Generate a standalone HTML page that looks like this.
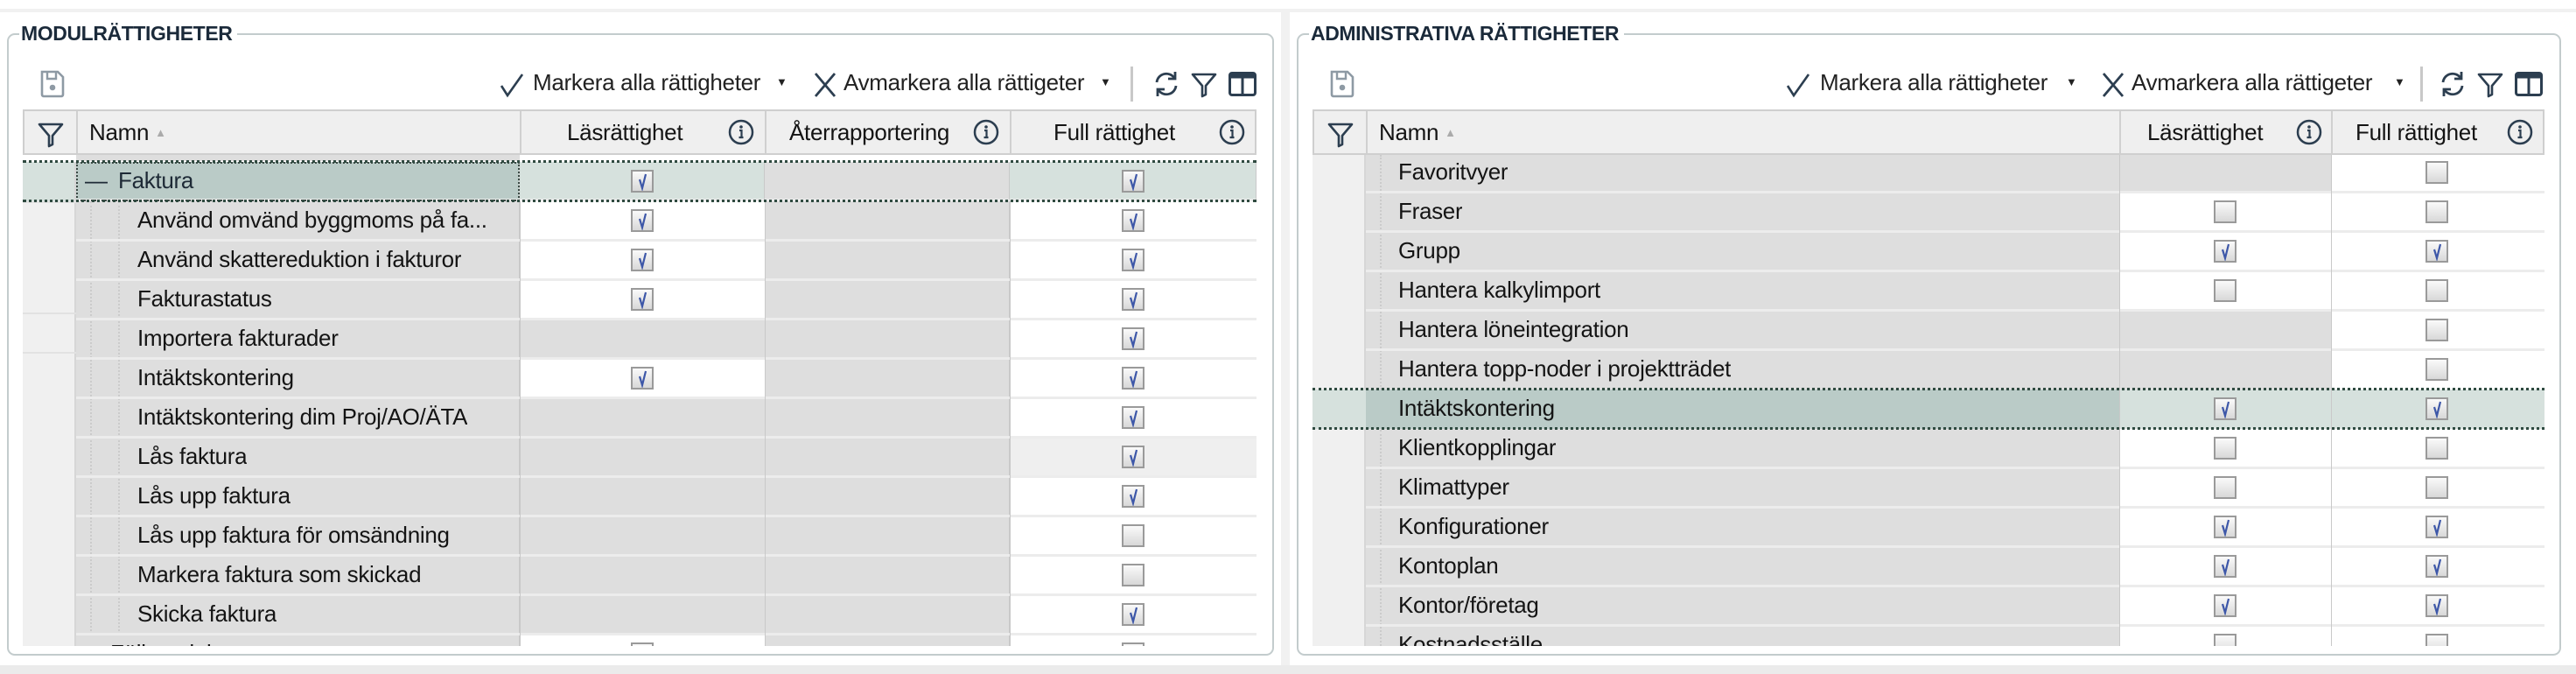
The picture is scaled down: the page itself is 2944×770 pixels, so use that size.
<!DOCTYPE html>
<html><head><meta charset="utf-8"><style>
*{box-sizing:border-box;margin:0;padding:0}
body{width:2944px;height:770px;background:#fff;position:relative;overflow:hidden;font-family:"Liberation Sans",sans-serif;color:#141414}
.abs{position:absolute}
.panel{position:absolute;top:38px;height:711px;border:2px solid #c3cccd;border-radius:9px}
.title{position:absolute;top:25px;font-size:23px;font-weight:bold;color:#1b2a3a;background:#fff;padding:0 6px 0 2px;letter-spacing:-0.4px;line-height:26px}
.tb{position:absolute;top:79px;font-size:26px;line-height:30px;color:#222;letter-spacing:-0.3px}
.grid{position:absolute;top:125px;height:613px;overflow:hidden;background:#fff}
.hdr{position:absolute;left:0;top:0;height:52px;background:#efefef;border:2px solid #cfcfcf;z-index:3}
.hc{position:absolute;top:0;height:48px;border-right:2px solid #d0d0d0;font-size:26px;line-height:48px;letter-spacing:-0.3px;white-space:nowrap}
.row{position:absolute;left:0;height:45px}
.cell{position:absolute;top:0;height:45px;border-bottom:3px solid #ececec;border-right:1px solid #c9c9c9}
.i0{background:#f0f0f0;border-right:2px solid #d6d6d6;border-bottom:none}
.nm{font-size:26px;line-height:43px;white-space:nowrap;overflow:hidden;letter-spacing:-0.3px}
.cb{position:absolute;top:9px;width:26px;height:26px;border:2px solid #9a9a9a;background:linear-gradient(#fafafa,#d8d8d8)}
.sel .cell{background:#d6e1dd}
.sel .nmc{background:#bacbc7;outline:2px dotted #3c4a45;outline-offset:-2px}
.dot{position:absolute;left:0;height:0;border-top:3px dotted #2f4a40;z-index:2}
.tl{position:absolute;top:0;bottom:0;border-left:2px dotted #cbcbcb}
</style></head><body>
<div class="abs" style="left:0;top:10px;width:2944px;height:4px;background:#f1f1f1"></div>
<div class="abs" style="left:1464px;top:14px;width:10px;height:746px;background:#f1f1f1"></div>
<div class="abs" style="left:0;top:760px;width:2944px;height:10px;background:#ebebeb"></div>

<svg width="0" height="0" style="position:absolute">
<defs>
<symbol id="ck" viewBox="0 0 22 22"><path d="M8 9 L11 19 L15 3" fill="none" stroke="#3d57a8" stroke-width="2.2"/></symbol>
<symbol id="info" viewBox="0 0 30 30"><circle cx="15" cy="15" r="13" fill="none" stroke="#2c3e50" stroke-width="2.5"/><circle cx="15" cy="9" r="1.8" fill="#2c3e50"/><path d="M13 13h2.5v8M12.5 21h5" fill="none" stroke="#2c3e50" stroke-width="2.2"/></symbol>
<symbol id="save" viewBox="0 0 32 32"><path d="M4 2h18l6 6v20a2 2 0 0 1-2 2H6a2 2 0 0 1-2-2z" fill="none" stroke="#8e9aa4" stroke-width="2.6"/><path d="M10 2v8h10V2" fill="none" stroke="#8e9aa4" stroke-width="2.4"/><circle cx="16" cy="20" r="3.3" fill="#8e9aa4"/></symbol>
<symbol id="filt" viewBox="0 0 32 32"><path d="M3 5h26L18 18v10l-4 2V18z" fill="none" stroke="#2c3e50" stroke-width="2.6" stroke-linejoin="round"/></symbol>
<symbol id="refr" viewBox="0 0 32 32"><path d="M5 14a11 11 0 0 1 20-5M27 18a11 11 0 0 1-20 5" fill="none" stroke="#2c3e50" stroke-width="2.8"/><path d="M26 2v8h-8M6 30v-8h8" fill="none" stroke="#2c3e50" stroke-width="2.8"/></symbol>
<symbol id="cols" viewBox="0 0 32 28"><rect x="1.5" y="1.5" width="29" height="25" rx="2.5" fill="none" stroke="#2c3e50" stroke-width="3"/><rect x="1.5" y="1.5" width="29" height="6" fill="#2c3e50"/><path d="M16 2v25" stroke="#2c3e50" stroke-width="3"/></symbol>
<symbol id="chk" viewBox="0 0 30 30"><path d="M3 16 L10 27 L27 3" fill="none" stroke="#2c3e50" stroke-width="2.6"/></symbol>
<symbol id="x" viewBox="0 0 30 30"><path d="M4 2 L26 28 M26 2 L4 28" fill="none" stroke="#2c3e50" stroke-width="2.8"/></symbol>
</defs></svg>

<!-- LEFT PANEL -->
<div class="panel" style="left:8px;width:1448px"></div>
<div class="title" style="left:22px">MODULRÄTTIGHETER</div>
<svg class="abs" style="left:44px;top:80px" width="32" height="32"><use href="#save"/></svg>
<svg class="abs" style="left:570px;top:82px" width="30" height="30"><use href="#chk"/></svg>
<div class="tb" style="left:609px">Markera alla rättigheter</div>
<div class="tb" style="left:887px;font-size:13px">▼</div>
<svg class="abs" style="left:928px;top:82px" width="30" height="30"><use href="#x"/></svg>
<div class="tb" style="left:964px">Avmarkera alla rättigeter</div>
<div class="tb" style="left:1257px;font-size:13px">▼</div>
<div class="abs" style="left:1292px;top:76px;width:3px;height:40px;background:#c8c8c8"></div>
<svg class="abs" style="left:1317px;top:80px" width="32" height="32"><use href="#refr"/></svg>
<svg class="abs" style="left:1360px;top:80px" width="32" height="32"><use href="#filt"/></svg>
<svg class="abs" style="left:1404px;top:82px" width="32" height="28"><use href="#cols"/></svg>

<div class="grid" style="left:26px;width:1410px">
 <div class="hdr" style="width:1410px">
  <div class="hc" style="left:0;width:61px"><svg class="abs" style="left:14px;top:10px" width="32" height="32"><use href="#filt"/></svg></div>
  <div class="hc" style="left:61px;width:507px;padding-left:13px">Namn <span style="color:#aaa;font-size:13px;vertical-align:4px">▲</span></div>
  <div class="hc" style="left:568px;width:280px"><span class="abs" style="left:52px">Läsrättighet</span><svg class="abs" style="left:236px;top:9px" width="30" height="30"><use href="#info"/></svg></div>
  <div class="hc" style="left:848px;width:280px"><span class="abs" style="left:26px">Återrapportering</span><svg class="abs" style="left:236px;top:9px" width="30" height="30"><use href="#info"/></svg></div>
  <div class="hc" style="left:1128px;width:278px;border-right:none"><span class="abs" style="left:48px">Full rättighet</span><svg class="abs" style="left:237px;top:9px" width="30" height="30"><use href="#info"/></svg></div>
 </div>
 <div class="dot" style="top:58px;width:1410px"></div>
 <div class="dot" style="top:103px;width:1410px"></div>
 <div class="row sel" style="top:60px;width:1410px">
  <div class="cell i0" style="left:0;width:61px;background:#d6e1dd"></div>
  <div class="cell nmc nm" style="left:61px;width:507px;padding-left:48px;color:#1e2a36"><span class="abs" style="left:10px;top:0">—</span>Faktura</div>
  <div class="cell" style="left:568px;width:280px"><div class="cb" style="left:127px"><svg width="22" height="22"><use href="#ck"/></svg></div></div>
  <div class="cell" style="left:848px;width:280px;background:#dedede"></div>
  <div class="cell" style="left:1128px;width:282px"><div class="cb" style="left:128px"><svg width="22" height="22"><use href="#ck"/></svg></div></div>
 </div>
</div>

<div class="abs" style="left:26px;top:230px;width:1410px;height:508px;overflow:hidden">
 <div class="abs" style="left:0;top:0;width:61px;height:508px;background:#f0f0f0;border-right:2px solid #d6d6d6"></div>
 <div class="abs" style="left:0;top:127px;width:61px;height:2px;background:#e2e2e2"></div>
 <div class="abs" style="left:0;top:172px;width:61px;height:2px;background:#e2e2e2"></div>
 <div class="abs" style="left:0;top:0;width:61px;height:2px;background:#e2e2e2"></div>
 <div class="abs" style="left:61px;top:0;width:507px;height:508px;background:#dedede;border-right:1px solid #c9c9c9"></div>
 <div class="abs" style="left:848px;top:0;width:280px;height:508px;background:#dedede;border-left:1px solid #c9c9c9;border-right:1px solid #c9c9c9"></div>
 <div class="abs" style="left:568px;top:0;width:280px;height:508px;background:#dedede"></div>
 <div class="abs" style="left:1128px;top:0;width:282px;height:508px;background:#fff"></div>
 <div class="tl" style="left:77px;height:495px"></div>
 <div class="tl" style="left:109px;height:495px"></div>
</div>
<div class="abs" style="left:26px;top:230px;width:1410px;height:508px;overflow:hidden">
 <div class="row" style="top:0;width:1410px"><div class="abs" style="left:568px;width:280px;height:45px;background:#fff"></div><div class="abs nm" style="left:131px;width:435px">Använd omvänd byggmoms på fa...</div><div class="cb" style="left:695px"><svg width="22" height="22"><use href="#ck"/></svg></div><div class="cb" style="left:1256px"><svg width="22" height="22"><use href="#ck"/></svg></div></div>
 <div class="row" style="top:45px;width:1410px"><div class="abs" style="left:568px;width:280px;height:45px;background:#fff"></div><div class="abs nm" style="left:131px">Använd skattereduktion i fakturor</div><div class="cb" style="left:695px"><svg width="22" height="22"><use href="#ck"/></svg></div><div class="cb" style="left:1256px"><svg width="22" height="22"><use href="#ck"/></svg></div></div>
 <div class="row" style="top:90px;width:1410px"><div class="abs" style="left:568px;width:280px;height:45px;background:#fff"></div><div class="abs nm" style="left:131px">Fakturastatus</div><div class="cb" style="left:695px"><svg width="22" height="22"><use href="#ck"/></svg></div><div class="cb" style="left:1256px"><svg width="22" height="22"><use href="#ck"/></svg></div></div>
 <div class="row" style="top:135px;width:1410px"><div class="abs nm" style="left:131px">Importera fakturader</div><div class="cb" style="left:1256px"><svg width="22" height="22"><use href="#ck"/></svg></div></div>
 <div class="row" style="top:180px;width:1410px"><div class="abs" style="left:568px;width:280px;height:45px;background:#fff"></div><div class="abs nm" style="left:131px">Intäktskontering</div><div class="cb" style="left:695px"><svg width="22" height="22"><use href="#ck"/></svg></div><div class="cb" style="left:1256px"><svg width="22" height="22"><use href="#ck"/></svg></div></div>
 <div class="row" style="top:225px;width:1410px"><div class="abs nm" style="left:131px">Intäktskontering dim Proj/AO/ÄTA</div><div class="cb" style="left:1256px"><svg width="22" height="22"><use href="#ck"/></svg></div></div>
 <div class="row" style="top:270px;width:1410px"><div class="abs" style="left:1128px;width:282px;height:45px;background:#efefef"></div><div class="abs nm" style="left:131px">Lås faktura</div><div class="cb" style="left:1256px"><svg width="22" height="22"><use href="#ck"/></svg></div></div>
 <div class="row" style="top:315px;width:1410px"><div class="abs nm" style="left:131px">Lås upp faktura</div><div class="cb" style="left:1256px"><svg width="22" height="22"><use href="#ck"/></svg></div></div>
 <div class="row" style="top:360px;width:1410px"><div class="abs nm" style="left:131px">Lås upp faktura för omsändning</div><div class="cb" style="left:1256px"></div></div>
 <div class="row" style="top:405px;width:1410px"><div class="abs nm" style="left:131px">Markera faktura som skickad</div><div class="cb" style="left:1256px"></div></div>
 <div class="row" style="top:450px;width:1410px"><div class="abs nm" style="left:131px">Skicka faktura</div><div class="cb" style="left:1256px"><svg width="22" height="22"><use href="#ck"/></svg></div></div>
 <div class="row" style="top:495px;width:1410px"><div class="abs" style="left:568px;width:280px;height:45px;background:#fff"></div><div class="abs nm" style="left:100px">Följesedel</div><div class="cb" style="left:695px"></div><div class="cb" style="left:1256px"></div></div>
 <div class="abs" style="left:61px;top:43px;width:1349px;height:3px;background:#ececec"></div>
 <div class="abs" style="left:61px;top:88px;width:1349px;height:3px;background:#ececec"></div>
 <div class="abs" style="left:61px;top:133px;width:1349px;height:3px;background:#ececec"></div>
 <div class="abs" style="left:61px;top:178px;width:1349px;height:3px;background:#ececec"></div>
 <div class="abs" style="left:61px;top:223px;width:1349px;height:3px;background:#ececec"></div>
 <div class="abs" style="left:61px;top:268px;width:1349px;height:3px;background:#ececec"></div>
 <div class="abs" style="left:61px;top:313px;width:1349px;height:3px;background:#ececec"></div>
 <div class="abs" style="left:61px;top:358px;width:1349px;height:3px;background:#ececec"></div>
 <div class="abs" style="left:61px;top:403px;width:1349px;height:3px;background:#ececec"></div>
 <div class="abs" style="left:61px;top:448px;width:1349px;height:3px;background:#ececec"></div>
 <div class="abs" style="left:61px;top:493px;width:1349px;height:3px;background:#ececec"></div>
 <div class="abs" style="left:1128px;top:0;width:1px;height:508px;background:#c9c9c9"></div>
 <div class="abs" style="left:848px;top:0;width:1px;height:508px;background:#c9c9c9"></div>
 <div class="abs" style="left:568px;top:0;width:1px;height:508px;background:#c9c9c9"></div>
</div>
<div class="abs" style="left:87px;top:177px;width:507px;height:7px;background:#dedede"></div>

<!-- RIGHT PANEL -->
<div class="panel" style="left:1482px;width:1445px"></div>
<div class="title" style="left:1496px">ADMINISTRATIVA RÄTTIGHETER</div>
<svg class="abs" style="left:1518px;top:80px" width="32" height="32"><use href="#save"/></svg>
<svg class="abs" style="left:2040px;top:82px" width="30" height="30"><use href="#chk"/></svg>
<div class="tb" style="left:2080px">Markera alla rättigheter</div>
<div class="tb" style="left:2361px;font-size:13px">▼</div>
<svg class="abs" style="left:2400px;top:82px" width="30" height="30"><use href="#x"/></svg>
<div class="tb" style="left:2436px">Avmarkera alla rättigeter</div>
<div class="tb" style="left:2736px;font-size:13px">▼</div>
<div class="abs" style="left:2766px;top:76px;width:3px;height:40px;background:#c8c8c8"></div>
<svg class="abs" style="left:2787px;top:80px" width="32" height="32"><use href="#refr"/></svg>
<svg class="abs" style="left:2830px;top:80px" width="32" height="32"><use href="#filt"/></svg>
<svg class="abs" style="left:2874px;top:82px" width="32" height="28"><use href="#cols"/></svg>

<div class="grid" style="left:1500px;width:1408px">
 <div class="hdr" style="width:1408px">
  <div class="hc" style="left:0;width:61px"><svg class="abs" style="left:14px;top:10px" width="32" height="32"><use href="#filt"/></svg></div>
  <div class="hc" style="left:61px;width:861px;padding-left:13px">Namn <span style="color:#aaa;font-size:13px;vertical-align:4px">▲</span></div>
  <div class="hc" style="left:922px;width:242px"><span class="abs" style="left:30px">Läsrättighet</span><svg class="abs" style="left:200px;top:9px" width="30" height="30"><use href="#info"/></svg></div>
  <div class="hc" style="left:1164px;width:240px;border-right:none"><span class="abs" style="left:26px">Full rättighet</span><svg class="abs" style="left:199px;top:9px" width="30" height="30"><use href="#info"/></svg></div>
 </div>
</div>
<div class="abs" style="left:1500px;top:177px;width:1408px;height:561px;overflow:hidden">
 <div class="abs" style="left:0;top:0;width:61px;height:561px;background:#f0f0f0;border-right:2px solid #d6d6d6"></div>
 <div class="abs" style="left:61px;top:0;width:861px;height:561px;background:#dedede"></div>
 <div class="abs" style="left:922px;top:0;width:242px;height:561px;background:#fff"></div>
 <div class="abs" style="left:922px;top:0;width:242px;height:43px;background:#dedede"></div>
 <div class="abs" style="left:922px;top:178px;width:242px;height:90px;background:#dedede"></div>
 <div class="abs" style="left:1164px;top:0;width:244px;height:561px;background:#fff"></div>
 <div class="abs" style="left:0;top:268px;width:1408px;height:45px;background:#d6e1dd"></div>
 <div class="abs" style="left:61px;top:268px;width:861px;height:45px;background:#bacbc7"></div>
 <div class="abs" style="left:0;top:266px;width:1408px;border-top:3px dotted #2f4a40"></div>
 <div class="abs" style="left:0;top:311px;width:1408px;border-top:3px dotted #2f4a40"></div>
 <div class="tl" style="left:77px;top:0;height:268px"></div>
 <div class="tl" style="left:77px;top:314px;height:247px"></div>
 <div class="abs" style="left:61px;top:41px;width:1347px;height:3px;background:#ececec"></div>
 <div class="abs" style="left:61px;top:86px;width:1347px;height:3px;background:#ececec"></div>
 <div class="abs" style="left:61px;top:131px;width:1347px;height:3px;background:#ececec"></div>
 <div class="abs" style="left:61px;top:176px;width:1347px;height:3px;background:#ececec"></div>
 <div class="abs" style="left:61px;top:221px;width:1347px;height:3px;background:#ececec"></div>
 <div class="abs" style="left:61px;top:356px;width:1347px;height:3px;background:#ececec"></div>
 <div class="abs" style="left:61px;top:401px;width:1347px;height:3px;background:#ececec"></div>
 <div class="abs" style="left:61px;top:446px;width:1347px;height:3px;background:#ececec"></div>
 <div class="abs" style="left:61px;top:491px;width:1347px;height:3px;background:#ececec"></div>
 <div class="abs" style="left:61px;top:536px;width:1347px;height:3px;background:#ececec"></div>
 <div class="abs" style="left:922px;top:0;width:1px;height:561px;background:#c9c9c9"></div>
 <div class="abs" style="left:1164px;top:0;width:1px;height:561px;background:#c9c9c9"></div>
 <div class="row" style="top:-2px;width:1408px"><div class="abs nm" style="left:98px">Favoritvyer</div><div class="cb" style="left:1272px"></div></div>
 <div class="row" style="top:43px;width:1408px"><div class="abs nm" style="left:98px">Fraser</div><div class="cb" style="left:1030px"></div><div class="cb" style="left:1272px"></div></div>
 <div class="row" style="top:88px;width:1408px"><div class="abs nm" style="left:98px">Grupp</div><div class="cb" style="left:1030px"><svg width="22" height="22"><use href="#ck"/></svg></div><div class="cb" style="left:1272px"><svg width="22" height="22"><use href="#ck"/></svg></div></div>
 <div class="row" style="top:133px;width:1408px"><div class="abs nm" style="left:98px">Hantera kalkylimport</div><div class="cb" style="left:1030px"></div><div class="cb" style="left:1272px"></div></div>
 <div class="row" style="top:178px;width:1408px"><div class="abs nm" style="left:98px">Hantera löneintegration</div><div class="cb" style="left:1272px"></div></div>
 <div class="row" style="top:223px;width:1408px"><div class="abs nm" style="left:98px">Hantera topp-noder i projektträdet</div><div class="cb" style="left:1272px"></div></div>
 <div class="row" style="top:268px;width:1408px"><div class="abs nm" style="left:98px">Intäktskontering</div><div class="cb" style="left:1030px"><svg width="22" height="22"><use href="#ck"/></svg></div><div class="cb" style="left:1272px"><svg width="22" height="22"><use href="#ck"/></svg></div></div>
 <div class="row" style="top:313px;width:1408px"><div class="abs nm" style="left:98px">Klientkopplingar</div><div class="cb" style="left:1030px"></div><div class="cb" style="left:1272px"></div></div>
 <div class="row" style="top:358px;width:1408px"><div class="abs nm" style="left:98px">Klimattyper</div><div class="cb" style="left:1030px"></div><div class="cb" style="left:1272px"></div></div>
 <div class="row" style="top:403px;width:1408px"><div class="abs nm" style="left:98px">Konfigurationer</div><div class="cb" style="left:1030px"><svg width="22" height="22"><use href="#ck"/></svg></div><div class="cb" style="left:1272px"><svg width="22" height="22"><use href="#ck"/></svg></div></div>
 <div class="row" style="top:448px;width:1408px"><div class="abs nm" style="left:98px">Kontoplan</div><div class="cb" style="left:1030px"><svg width="22" height="22"><use href="#ck"/></svg></div><div class="cb" style="left:1272px"><svg width="22" height="22"><use href="#ck"/></svg></div></div>
 <div class="row" style="top:493px;width:1408px"><div class="abs nm" style="left:98px">Kontor/företag</div><div class="cb" style="left:1030px"><svg width="22" height="22"><use href="#ck"/></svg></div><div class="cb" style="left:1272px"><svg width="22" height="22"><use href="#ck"/></svg></div></div>
 <div class="row" style="top:538px;width:1408px"><div class="abs nm" style="left:98px">Kostnadsställe</div><div class="cb" style="left:1030px"></div><div class="cb" style="left:1272px"></div></div>
</div>
</body></html>
